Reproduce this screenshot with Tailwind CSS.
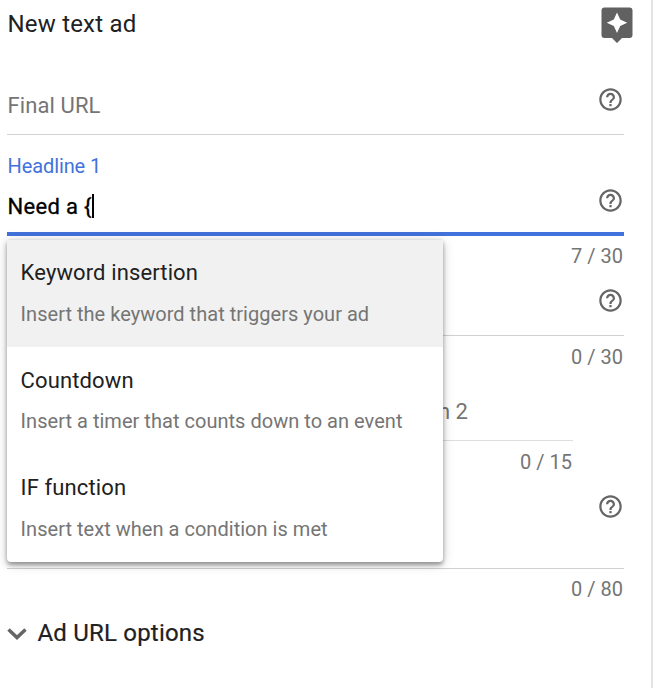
<!DOCTYPE html>
<html lang="en">
<head>
  <meta charset="UTF-8" />
  <meta name="viewport" content="width=device-width, initial-scale=1.0"/>
  <title>New text ad</title>
  <script src="https://cdn.jsdelivr.net/npm/@tailwindcss/browser@4"></script>
</head>
<body class="bg-white text-[#212121] font-['Roboto',sans-serif] h-[688px] overflow-hidden">

  <!-- Shared icon -->
  <svg class="hidden">
    <symbol id="help" viewBox="0 0 24 24">
      <path d="M11 18h2v-2h-2v2zm1-16C6.480 2 2 6.480 2 12s4.480 10 10 10 10-4.480 10-10S17.520 2 12 2zm0 18c-4.410 0-8-3.590-8-8s3.590-8 8-8 8 3.590 8 8-3.590 8-8 8zm0-14c-2.210 0-4 1.790-4 4h2c0-1.100.9-2 2-2s2 .9 2 2c0 2-3 1.750-3 5h2c0-2.250 3-2.500 3-5 0-2.210-1.790-4-4-4z"/>
    </symbol>
  </svg>

  <div class="w-[653px] h-full border-r-2 border-[#e4e4e4] pl-[7px] pr-[27px]">
    <!-- Header -->
    <header class="h-16 flex justify-between items-start -mr-[9px]">
      <h1 class="text-[24px] leading-8 pt-2 pl-[0.5px] tracking-[0.2px]">New text ad</h1>
      <svg class="w-8 h-9 mt-[7px]" viewBox="0 0 32 36">
        <path fill="#616161" d="M3.500 .5h25a3 3 0 0 1 3 3v24.500a3 3 0 0 1-3 3h-7.500L16 36l-5-5H3.500a3 3 0 0 1-3-3v-24.500a3 3 0 0 1 3-3z"/>
        <path fill="#fff" d="M16 5.500l3.200 7 7 3.200-7 3.200-3.200 7-3.200-7-7-3.200 7-3.200z"/>
      </svg>
    </header>

    <form>
      <!-- Final URL -->
      <div class="h-[71px] border-b border-[#d2d2d2] flex justify-between">
        <label class="text-[22px] leading-7 pt-7 pl-[0.5px] text-[#757575] tracking-[0.1px]">Final URL</label>
        <svg class="size-[27px] mt-[22px] fill-[#666]"><use href="#help"/></svg>
      </div>

      <!-- Headline 1 -->
      <div class="relative h-[101px] border-b-4 border-[#4272db] flex justify-between">
        <div class="pl-[0.5px]">
          <label class="block text-[20px] leading-6 pt-[19px] text-[#4272db] -tracking-[0.1px]">Headline 1</label>
          <div class="flex items-center h-8 mt-3 text-[22px] text-black tracking-[0.3px] [-webkit-text-stroke:0.3px]">
            <span>Need a {</span><span class="w-0.5 h-6 bg-black"></span>
          </div>
        </div>
        <svg class="size-[27px] mt-[52px] fill-[#666]"><use href="#help"/></svg>

        <!-- Suggestions -->
        <ul class="absolute z-10 left-0 top-[104px] w-[436px] h-[323px] bg-white rounded overflow-hidden shadow-[0_3px_4px_rgba(0,0,0,0.35),0_2px_12px_rgba(0,0,0,0.2)]">
          <li class="h-[108px] bg-[#f1f1f1] border-t border-[#e2e2e2] pl-[13.6px] pt-[19px]">
            <p class="text-[22px] leading-7 tracking-[0.12px]">Keyword insertion</p>
            <p class="text-[20px] leading-6 mt-[15px] text-[#757575] tracking-[0.03px]">Insert the keyword that triggers your ad</p>
          </li>
          <li class="h-[107px] pl-[13.6px] pt-5">
            <p class="text-[22px] leading-7 tracking-[0.12px]">Countdown</p>
            <p class="text-[20px] leading-6 mt-[14px] text-[#757575] tracking-[0.03px]">Insert a timer that counts down to an event</p>
          </li>
          <li class="h-[108px] pl-[13.6px] pt-5">
            <p class="text-[22px] leading-7 tracking-[0.12px]">IF function</p>
            <p class="text-[20px] leading-6 mt-[15px] text-[#757575] tracking-[0.03px]">Insert text when a condition is met</p>
          </li>
        </ul>
      </div>
      <p class="h-10 pt-2 pr-px text-right text-[20px] leading-6 text-[#757575]">7 / 30</p>

      <!-- Headline 2 -->
      <div class="h-[60px] border-b border-[#d2d2d2] flex justify-end">
        <svg class="size-[27px] mt-[11px] fill-[#666]"><use href="#help"/></svg>
      </div>
      <p class="h-10 pt-[9px] pr-px text-right text-[20px] leading-6 text-[#757575]">0 / 30</p>

      <!-- Display path -->
      <div class="mr-[51px]">
        <div class="h-[65px] border-b border-[#dedede] flex justify-end">
          <label class="w-[168px] text-[22px] leading-7 pt-[22px] text-[#757575]">Path 2</label>
        </div>
        <p class="h-10 pt-[9px] pr-px text-right text-[20px] leading-6 text-[#757575]">0 / 15</p>
      </div>

      <!-- Description -->
      <div class="h-[88px] border-b border-[#d2d2d2] flex justify-end">
        <svg class="size-[27px] mt-3 fill-[#666]"><use href="#help"/></svg>
      </div>
      <p class="h-10 pt-2 pr-px text-right text-[20px] leading-6 text-[#757575]">0 / 80</p>
    </form>

    <!-- URL options -->
    <div class="flex items-center gap-[10.5px] h-12">
      <svg class="w-5 h-3.5 mt-0.5" viewBox="0 0 20 14" fill="none" stroke="#666" stroke-width="3.500"><path d="M1.500 2.500L10 10.500l8.500-8"/></svg>
      <span class="text-[24px] tracking-[0.2px] [-webkit-text-stroke:0.2px]">Ad URL options</span>
    </div>
  </div>

</body>
</html>
